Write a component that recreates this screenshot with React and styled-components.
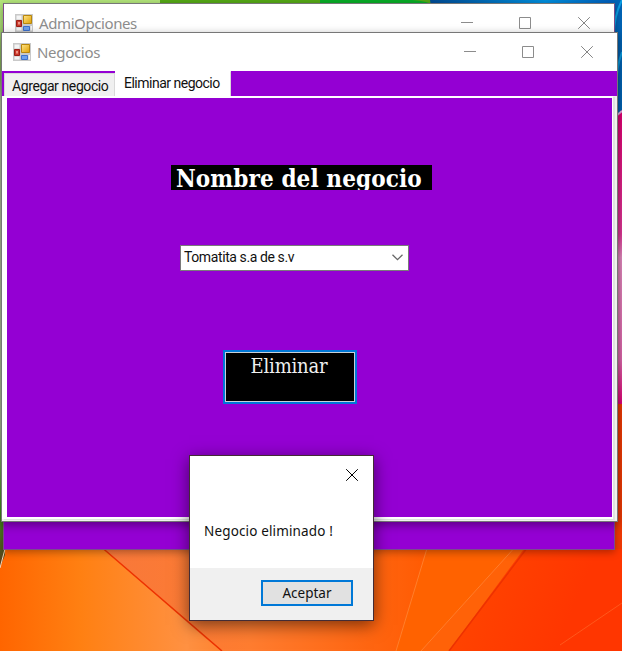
import React from "react";
import styled, { createGlobalStyle } from "styled-components";

const PURPLE = "#9400d3";

const GlobalStyle = createGlobalStyle`
  * { box-sizing: border-box; }
  body { margin: 0; overflow: hidden; }
`;

const Desktop = styled.main`
  position: relative;
  width: 622px;
  height: 651px;
  overflow: hidden;
  background: #ff5a00;
`;

const Wallpaper = styled.svg`
  display: block;
  width: 622px;
  height: 651px;
`;

const Window = styled.section`
  position: absolute;
  left: ${(p) => p.$x}px;
  top: ${(p) => p.$y}px;
  width: ${(p) => p.$w}px;
  height: ${(p) => p.$h}px;
  display: flex;
  flex-direction: column;
  border: 1px solid ${(p) => p.$border};
  border-top-color: ${(p) => p.$top || p.$border};
  background: ${(p) => p.$fill};
  box-shadow: ${(p) => p.$shadow};
`;

const TitleBar = styled.header`
  flex: none;
  display: flex;
  align-items: center;
  height: 38px;
  padding-left: 11px;
  background: #fff;
`;

const Text = styled.span`
  font-family: ${(p) => p.$font || '"Noto Sans"'}, sans-serif;
  font-size: ${(p) => p.$size}px;
  font-weight: ${(p) => p.$weight || 400};
  line-height: ${(p) => p.$line || 20}px;
  letter-spacing: ${(p) => p.$track || 0}px;
  color: ${(p) => p.$color || "#111"};
  white-space: pre;
`;

const TitleText = styled(Text)`
  flex: 1;
  margin: -1px 0 0 6px;
`;

const Controls = styled.div`
  display: flex;
  gap: 46px;
  padding-right: 24px;

  > :last-child { margin-left: 1px; }
`;

const Glyph = styled.svg`
  display: block;
  flex: none;
`;

const Client = styled.div`
  flex: 1;
  display: flex;
  flex-direction: column;
`;

const TabStrip = styled.nav`
  flex: none;
  display: flex;
  align-items: flex-end;
  height: 25px;
  padding-left: 2px;
  background: ${PURPLE};
`;

const Tab = styled.div`
  width: ${(p) => p.$w}px;
  height: ${(p) => (p.$active ? 25 : 23)}px;
  padding: ${(p) => (p.$active ? "1px 0 0 8px" : "2px 0 0 7px")};
  background: ${(p) => (p.$active ? "#fff" : "#f0f0f0")};
  border: 1px solid ${(p) => (p.$active ? "#fff" : "#d9d9d9")};
  border-right-color: #d9d9d9;
  border-bottom: 0;
  line-height: 20px;
`;

const TabPage = styled.div`
  flex: 1;
  display: flex;
  flex-direction: column;
  align-items: flex-start;
  border: solid #fff;
  border-width: 2px 1px 2px 5px;
  margin: 0 4px 2px 0;
  background: ${PURPLE};
  box-shadow: 2px 1px 0 #dfe3df;
`;

const NameLabel = styled.div`
  width: 261px;
  height: 25px;
  margin: 67px 0 0 164px;
  padding-left: 5px;
  background: #000;
  overflow: hidden;
`;

const Combo = styled.div`
  display: flex;
  align-items: center;
  justify-content: space-between;
  width: 229px;
  height: 26px;
  margin: 55px 0 0 173px;
  padding: 0 5px 2px 3px;
  border: 1px solid #7a7a7a;
  background: #fff;
`;

const DeleteButton = styled.button`
  display: flex;
  justify-content: center;
  align-items: flex-start;
  width: 134px;
  height: 54px;
  margin: 79px 0 0 216px;
  padding: 0 2px 0 0;
  border: 2px solid #0078d7;
  background: #000;
  box-shadow: inset 0 0 0 1px #c8d0d8;
`;

const MessageBody = styled.div`
  height: 112px;
  display: flex;
  flex-direction: column;
  justify-content: space-between;
  padding: 13px 14px 27px;
`;

const CloseRow = styled.div`
  display: flex;
  justify-content: flex-end;
  padding-right: 1px;
`;

const MessageFooter = styled.footer`
  flex: 1;
  display: flex;
  justify-content: flex-end;
  align-items: flex-start;
  padding: 12px 20px 0 0;
  background: #f0f0f0;
`;

const AcceptButton = styled.button`
  width: 92px;
  height: 26px;
  padding: 0;
  border: 2px solid #0078d7;
  background: #e1e1e1;
  display: flex;
  justify-content: center;
  align-items: center;
`;

function FormIcon() {
  return (
    <Glyph width="18" height="18" viewBox="0 0 18 18">
      <defs>
        <linearGradient id="gold" x1="0" y1="0" x2="1" y2="1">
          <stop offset="0" stopColor="#ffe58a" />
          <stop offset="1" stopColor="#e0a000" />
        </linearGradient>
      </defs>
      <path d="M0 0h18v18H0z" fill="#c9c9c9" />
      <path d="M1.5 1.5h5v4h-5zM1.5 13.5h5v3h-5zM15.5 12h1.5v4.500h-1.500z" fill="#f4f4f4" />
      <path d="M8.500 1.500h8v8h-8z" fill="url(#gold)" stroke="#b8860b" />
      <path d="M1.500 6.500h5v6h-5z" fill="#c93a2c" stroke="#9d1d16" />
      <path d="M3 8h2v2.500H3z" fill="#ef9384" />
      <path d="M8.500 12.500h6v4h-6z" fill="#6fa0ec" stroke="#3d70cc" />
    </Glyph>
  );
}

function CloseIcon({ color = "#000" }) {
  return (
    <Glyph width="12" height="12" viewBox="0 0 12 12" fill="none" stroke={color}>
      <path d="M.2.2l11.600 11.600M11.800.2L.2 11.800" />
    </Glyph>
  );
}

function WindowControls() {
  return (
    <Controls>
      <Glyph width="12" height="12" viewBox="0 0 12 12">
        <path d="M0 5h12v1H0z" fill="#8c8c8c" />
      </Glyph>
      <Glyph width="12" height="12" viewBox="0 0 12 12">
        <path d="M.5.5h11v11H.5z" fill="none" stroke="#8c8c8c" />
      </Glyph>
      <CloseIcon color="#858585" />
    </Controls>
  );
}

function Background() {
  return (
    <Wallpaper viewBox="0 0 622 651">
      <defs>
        <linearGradient id="petals" x1="0" x2="1" y1="0" y2="0">
          <stop offset="0" stopColor="#ff6500" />
          <stop offset=".13" stopColor="#ff8012" />
          <stop offset=".3" stopColor="#ff9142" />
          <stop offset=".5" stopColor="#ff6508" />
          <stop offset=".72" stopColor="#ff4a00" />
          <stop offset="1" stopColor="#ff3200" />
        </linearGradient>
        <linearGradient id="leaf" x1="0" x2="0" y1="0" y2="1">
          <stop offset="0" stopColor="#b5e77c" />
          <stop offset=".14" stopColor="#8fbd62" />
          <stop offset=".18" stopColor="#c4d8b0" />
          <stop offset=".75" stopColor="#b7cda1" />
          <stop offset=".9" stopColor="#46a51d" />
          <stop offset="1" stopColor="#5b351c" />
        </linearGradient>
        <linearGradient id="pink" x1="0" x2="0" y1="0" y2="1">
          <stop offset="0" stopColor="#e50075" />
          <stop offset=".42" stopColor="#e13798" />
          <stop offset=".5" stopColor="#e58bc0" />
          <stop offset=".85" stopColor="#df66ac" />
          <stop offset="1" stopColor="#e40078" />
        </linearGradient>
        <linearGradient id="blue" x1="0" x2="1" y1="0" y2="0">
          <stop offset="0" stopColor="#004c96" />
          <stop offset=".6" stopColor="#0090e0" />
          <stop offset="1" stopColor="#0059b8" />
        </linearGradient>
        <linearGradient id="fold" gradientUnits="userSpaceOnUse" x1="110" x2="420" y1="0" y2="0">
          <stop offset="0" stopColor="#f8783a" />
          <stop offset=".45" stopColor="#ff7d30" />
          <stop offset="1" stopColor="#ff5c04" />
        </linearGradient>
        <linearGradient id="ridge" gradientUnits="userSpaceOnUse" x1="420" x2="560" y1="580" y2="640">
          <stop offset="0" stopColor="#ff5e06" />
          <stop offset=".35" stopColor="#ff4300" />
          <stop offset="1" stopColor="#ff3600" />
        </linearGradient>
      </defs>
      <path d="M0 540h622v111H0z" fill="url(#petals)" />
      <path d="M99 545L205 638 222 651H400L428 545z" fill="url(#fold)" />
      <path d="M428 545h89L421 651h-25z" fill="#ff6200" />
      <path d="M517 545L421 651h28l78-106z" fill="#ff6208" />
      <path d="M527 545L449 651h173V545z" fill="url(#ridge)" />
      <path d="M99 545L222 651M527 548L449 651" fill="none" stroke="#ed3200" strokeWidth="1.500" />
      <path d="M428 545L396 651M517 545L421 651" fill="none" stroke="#ff7f2c" />
      <path d="M622 603L560 645M150 550L195 579" fill="none" stroke="#ff7a36" strokeOpacity=".5" />
      <path d="M0 0h180v6H0z" fill="#b5e77c" />
      <path d="M0 0h5v555L0 567z" fill="url(#leaf)" />
      <path d="M5 549L0 568" stroke="#f6d9ba" />
      <path d="M160 0h274v6H160z" fill="#56aa17" />
      <path d="M320 0h92q16 1 23 6H320z" fill="#08ae27" />
      <path d="M430 0h192v32H435z" fill="url(#blue)" />
      <path d="M613 0h9v117h-9z" fill="#0064b6" />
      <path d="M622 0q-8 16-8 34M622 52q-6 16-5 34" stroke="#0aa0e4" strokeWidth="2" fill="none" />
      <path d="M615 116l7-6v295h-7z" fill="url(#pink)" />
      <path d="M616 116l6-5" stroke="#e2b3e8" strokeWidth="2" />
      <path d="M615 404h7v145h-7z" fill="#f13a05" />
    </Wallpaper>
  );
}

const SERIF = '"DejaVu Serif Condensed", "DejaVu Serif"';

export default function App() {
  return (
    <>
      <GlobalStyle />
      <Desktop>
        <Background />
        <Window $x={3} $y={3} $w={612} $h={547} $border="#7c4b8b" $top="#777" $fill={PURPLE} $shadow="0 2px 8px #0005">
          <TitleBar>
            <FormIcon />
            <TitleText $size={15} $track={-0.4} $color="#8d8d8d">AdmiOpciones</TitleText>
            <WindowControls />
          </TitleBar>
        </Window>
        <Window $x={1} $y={32} $w={617} $h={490} $border="#777" $fill="#f0f1ee" $shadow="0 3px 9px #0006">
          <TitleBar>
            <FormIcon />
            <TitleText $size={15} $track={-0.3} $color="#8d8d8d">Negocios</TitleText>
            <WindowControls />
          </TitleBar>
          <Client>
            <TabStrip>
              <Tab $w={111}>
                <Text $font="Roboto" $size={14} $track={-0.4}>Agregar negocio</Text>
              </Tab>
              <Tab $w={116} $active>
                <Text $font="Roboto" $size={14} $track={-0.5}>Eliminar negocio</Text>
              </Tab>
            </TabStrip>
            <TabPage>
              <NameLabel>
                <Text $font={SERIF} $size={24} $weight={700} $line={27} $track={0.1} $color="#fff">Nombre del negocio</Text>
              </NameLabel>
              <Combo>
                <Text $font="Roboto" $size={14} $track={-0.4}>Tomatita s.a de s.v</Text>
                <Glyph width="11" height="7" viewBox="0 0 11 7">
                  <path d="M.5.7l5 5 5-5" fill="none" stroke="#666" strokeWidth="1.300" />
                </Glyph>
              </Combo>
              <DeleteButton>
                <Text $font={SERIF} $size={20} $line={28} $track={-0.2} $color="#f0f0f0">Eliminar</Text>
              </DeleteButton>
            </TabPage>
          </Client>
        </Window>
        <Window $x={189} $y={455} $w={185} $h={166} $border="#432c35" $fill="#fff" $shadow="0 4px 16px #0008">
          <MessageBody>
            <CloseRow>
              <CloseIcon />
            </CloseRow>
            <Text $size={13.5} $track={0.15}>Negocio eliminado !</Text>
          </MessageBody>
          <MessageFooter>
            <AcceptButton>
              <Text $size={13.5}>Aceptar</Text>
            </AcceptButton>
          </MessageFooter>
        </Window>
      </Desktop>
    </>
  );
}
